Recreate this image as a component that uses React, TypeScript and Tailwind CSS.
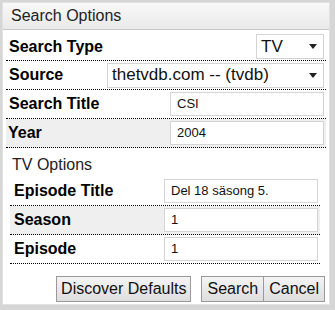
type Row = { label: string; value: string; shade?: boolean };

const mainRows: Row[] = [
    { label: "Search Title", value: "CSI" },
    { label: "Year", value: "2004", shade: true },
];

const tvRows: Row[] = [
    { label: "Episode Title", value: "Del 18 säsong 5." },
    { label: "Season", value: "1", shade: true },
    { label: "Episode", value: "1" },
];

function Caret() {
    return (
        <svg width="8" height="5" viewBox="0 0 8 5" className="shrink-0">
            <path d="M0 0h8L4 5z" fill="#222" />
        </svg>
    );
}

function FakeSelect({ value, className }: { value: string; className: string }) {
    return (
        <div
            className={`flex h-[25px] items-center justify-between border border-[#d4d4d4] bg-white pl-[4px] pr-[6px] text-[17px] text-[#111] ${className}`}
        >
            <span>{value}</span>
            <Caret />
        </div>
    );
}

function TextBox({ value, className }: { value: string; className: string }) {
    return (
        <div
            className={`flex h-[24px] items-center border border-[#d4d4d4] bg-white pl-[6px] text-[13px] text-[#111] ${className}`}
        >
            {value}
        </div>
    );
}

export default function App() {
    return (
        <div className="h-[310px] w-[335px] bg-[#d6d6d6] font-['Liberation_Sans',Arial,sans-serif]">
            <div className="ml-[2px] pt-[2px] w-[328px]">
                <div className="flex h-[303px] flex-col bg-white border border-[#e2e2e2]">

                    <div className="flex h-[27px] items-center border-b border-[#c8c8c8] bg-gradient-to-b from-[#f9f9f9] to-[#e9e9e9] px-[8px] text-[16px] text-[#222]">
                        Search Options
                    </div>

                    <div className="flex flex-col px-[3px] pt-[3px]">

                        <div className="flex h-[28px] items-center justify-between border-b border-dotted border-black pl-[3px] pr-[2px]">
                            <span className="text-[16px] font-bold text-black">Search Type</span>
                            <FakeSelect value="TV" className="w-[68px]" />
                        </div>

                        <div className="flex h-[29px] items-center justify-between border-b border-dotted border-black pl-[3px] pr-[2px]">
                            <span className="text-[16px] font-bold text-black">Source</span>
                            <FakeSelect value="thetvdb.com -- (tvdb)" className="w-[217px]" />
                        </div>

                        {mainRows.map((row) => (
                            <div
                                key={row.label}
                                className={`flex h-[29px] items-center justify-between border-b border-dotted border-black pr-[2px] ${row.shade ? "bg-[#efefef] pl-[2px]" : "pl-[3px]"}`}
                            >
                                <span className="text-[16px] font-bold text-black">{row.label}</span>
                                <TextBox value={row.value} className="w-[154px]" />
                            </div>
                        ))}

                        <div className="pl-[6px] pt-[5px] text-[16px] text-[#222]">TV Options</div>

                        <div className="flex flex-col pl-[4px] pr-[6px]">
                            {tvRows.map((row) => (
                                <div
                                    key={row.label}
                                    className={`flex h-[29px] items-center justify-between border-b border-dotted border-black pl-[4px] pr-[2px] ${row.shade ? "bg-[#efefef]" : ""}`}
                                >
                                    <span className="text-[16px] font-bold text-black">{row.label}</span>
                                    <TextBox value={row.value} className="w-[154px]" />
                                </div>
                            ))}
                        </div>

                        <div className="flex justify-end pr-[1px] pt-[12px]">
                            <button className="mr-[10px] h-[26px] border border-[#9a9a9a] bg-gradient-to-b from-[#f4f4f4] to-[#dedede] px-[4px] text-[16px] text-[#111]">
                                Discover Defaults
                            </button>
                            <button className="h-[26px] border border-[#9a9a9a] bg-gradient-to-b from-[#f4f4f4] to-[#dedede] px-[5px] text-[16px] text-[#111]">
                                Search
                            </button>
                            <button className="h-[26px] border border-l-0 border-[#9a9a9a] bg-gradient-to-b from-[#f4f4f4] to-[#dedede] px-[5px] text-[16px] text-[#111]">
                                Cancel
                            </button>
                        </div>
                    </div>
                </div>
            </div>
        </div>
    );
}
